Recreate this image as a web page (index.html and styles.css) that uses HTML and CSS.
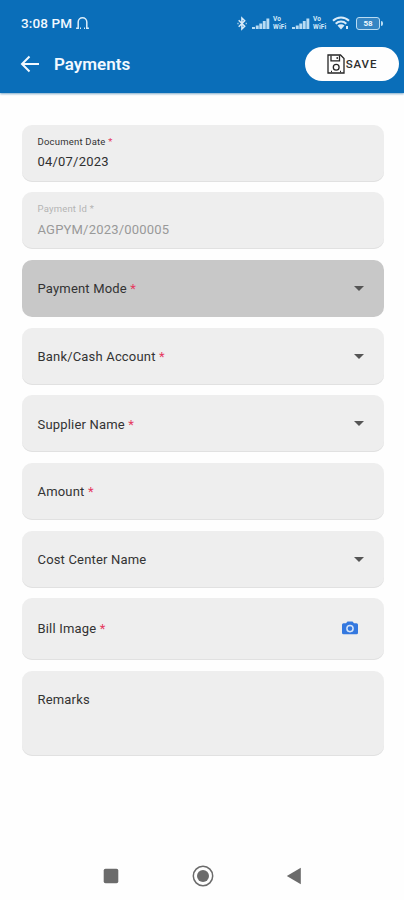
FILE: index.html
```
<!DOCTYPE html>
<html lang="en">
<head>
<meta charset="utf-8">
<meta name="viewport" content="width=device-width">
<title>Payments</title>
<link rel="stylesheet" href="styles.css">
</head>
<body>
<header class="top">
  <div class="status">
    <span class="time">3:08 PM</span>
    <svg class="headset" width="15" height="14" viewBox="0 0 15 14"><path d="M3.2 12.200V6a4.300 4.300 0 0 1 8.600 0v6.200M3.200 9v3.200H1.100M11.800 9v3.200h2.100M5 12.200h1M9 12.200h1"/></svg>
    <div class="indicators">
      <svg class="bt" width="10" height="15" viewBox="0 0 10 15"><path d="M1.700 4.200l6 6L4.900 13V2l2.800 2.800-6 6"/><path d="M.5 7.500h1M8.700 7.500h1"/></svg>
      <svg class="signal" width="18" height="13" viewBox="0 0 18 13"><path d="M0 10h3v2H0zM3.800 8.500h2.900V12H3.800zM7.300 6.500h2.900V12H7.300zM10.800 4h2.900v8h-2.900zM14.400 1.500h2.900V12h-2.900z"/></svg>
      <span class="vo"><span>Vo</span><span>WiFi</span></span>
      <svg class="signal second" width="18" height="13" viewBox="0 0 18 13"><path d="M0 10h3v2H0zM3.800 8.500h2.900V12H3.800zM7.300 6.500h2.900V12H7.300zM10.800 4h2.900v8h-2.900zM14.400 1.500h2.900V12h-2.900z"/></svg>
      <span class="vo"><span>Vo</span><span>WiFi</span></span>
      <svg class="wifi" width="18" height="14" viewBox="0 0 18 14"><path d="M1 4.700a11.500 11.500 0 0 1 16 0M3.700 7.700a7.600 7.600 0 0 1 10.600 0"/><path class="solid" d="M5.500 9.600a4.900 4.900 0 0 1 7 0L9 13.400zM14 10h2v3h-2z"/></svg>
      <span class="battery">58</span>
    </div>
  </div>
  <div class="bar">
    <svg class="back" width="20" height="18" viewBox="0 0 20 18"><path d="M9.500 1.500L2 9l7.500 7.500M2 9h17"/></svg>
    <h1>Payments</h1>
    <button class="save">
      <svg width="18" height="20" viewBox="0 0 18 20"><path d="M1 1h12.500L17 4.500V19H1z"/><path d="M4 1.500v5.300h8.500V1.500M10.200 3v2"/><circle cx="9.200" cy="13.200" r="2.900"/><path d="M4 17.500h1M13 17.500h1"/></svg>
      <span>SAVE</span>
    </button>
  </div>
</header>
<main class="form">
  <div class="field filled"><span class="caption">Document Date <b>*</b></span><span class="value">04/07/2023</span></div>
  <div class="field filled disabled"><span class="caption">Payment Id <b>*</b></span><span class="value id">AGPYM/2023/000005</span></div>
  <div class="field active"><span class="label">Payment Mode <b>*</b></span><i class="caret"></i></div>
  <div class="field"><span class="label">Bank/Cash Account <b>*</b></span><i class="caret"></i></div>
  <div class="field"><span class="label">Supplier Name <b>*</b></span><i class="caret"></i></div>
  <div class="field"><span class="label">Amount <b>*</b></span></div>
  <div class="field"><span class="label">Cost Center Name</span><i class="caret"></i></div>
  <div class="field bill"><span class="label">Bill Image <b>*</b></span>
    <svg class="camera" width="16" height="14" viewBox="0 0 16 14"><path d="M5.500.5h5L12 2.200h2.500Q16 2.200 16 3.700v8q0 1.500-1.500 1.500h-13Q0 13.200 0 11.700v-8q0-1.500 1.500-1.500H4z"/><circle class="ring" cx="8" cy="7.600" r="3.100"/></svg>
  </div>
  <div class="field remarks"><span class="label">Remarks</span></div>
</main>
<nav class="system">
  <svg width="16" height="16" viewBox="0 0 16 16"><rect x=".7" y=".7" width="14.600" height="14.600" rx="1.800"/></svg>
  <svg width="22" height="22" viewBox="0 0 22 22"><circle class="outline" cx="11" cy="11" r="9.700"/><circle cx="11" cy="11" r="6"/></svg>
  <svg width="16" height="18" viewBox="0 0 16 18"><path d="M.8 9L14.800.8v16.400z"/></svg>
</nav>
</body>
</html>
```
FILE: styles.css
```
* { box-sizing: border-box; }
body {
  margin: 0;
  height: 900px;
  display: flex;
  flex-direction: column;
  background: #fefefe;
  font-family: Roboto, "Liberation Sans", sans-serif;
  color: #333;
  overflow: hidden;
}
svg { display: block; flex: none; }
.top {
  height: 93px;
  flex: none;
  background: #0a6eb9;
  color: #f2f9ff;
  box-shadow: 0 1px 2px #7da9c8;
}
.status {
  height: 46px;
  padding: 0 21px;
  display: flex;
  align-items: center;
}
.time { font-size: 13.5px; font-weight: 500; letter-spacing: .1px; white-space: nowrap; width: 54px; }
.headset { fill: none; stroke: #dceefa; stroke-width: 1.500; }
.indicators { margin-left: auto; display: flex; align-items: center; }
.bt { fill: none; stroke: #d8ebf9; stroke-width: 1.500; margin-right: 5px; }
.signal { fill: #b9dcf3; margin-right: 3px; }
.second { margin-left: 3px; }
.vo {
  width: 16px;
  display: flex;
  flex-direction: column;
  font-size: 6.500px;
  line-height: 8px;
  font-weight: 700;
  color: #d3eafa;
  letter-spacing: .2px;
}
.wifi { fill: none; stroke: #d8ebf9; stroke-width: 2; margin: 0 6px 0 3px; }
.wifi .solid { fill: #d8ebf9; stroke: none; }
.battery {
  width: 24px;
  height: 13px;
  margin-right: 3px;
  border: 1.500px solid #b9dcf3;
  border-radius: 3px;
  background: #3585c3;
  font-size: 8px;
  line-height: 11px;
  font-weight: 700;
  text-align: center;
  position: relative;
}
.battery::after {
  content: "";
  position: absolute;
  right: -4px;
  top: 3px;
  width: 2px;
  height: 5px;
  background: #b9dcf3;
  border-radius: 0 2px 2px 0;
}
.bar { height: 36px; padding: 0 5px 0 20px; display: flex; align-items: center; }
.back { fill: none; stroke: #f2f9ff; stroke-width: 2; }
h1 { margin: 0 0 0 14px; font-size: 17px; font-weight: 600; line-height: 22px; letter-spacing: 0; }
.save {
  margin-left: auto;
  width: 94px;
  height: 34px;
  padding: 0;
  border: 0;
  border-radius: 17px;
  background: #fefefe;
  display: flex;
  align-items: center;
  justify-content: center;
  gap: 1px;
  color: #2d2d2d;
  font: 500 11.500px Roboto, "Liberation Sans", sans-serif;
  letter-spacing: .9px;
}
.save svg { fill: none; stroke: #252525; stroke-width: 1.300; }
.form {
  padding: 31.500px 20px 0 21.500px;
  display: flex;
  flex-direction: column;
  gap: 10.700px;
}
.field {
  height: 57px;
  padding: 0 20px 0 16px;
  border-radius: 10px;
  background: #eee;
  box-shadow: inset 0 -1px 0 #e1e1e1;
  display: flex;
  align-items: center;
  justify-content: space-between;
}
.field b { color: #e5395f; font-weight: 400; }
.filled { flex-direction: column; align-items: flex-start; justify-content: flex-start; padding-top: 10px; }
.caption { font-size: 9.500px; line-height: 14px; letter-spacing: .2px; }
.value { font-size: 13px; line-height: 18px; margin-top: 4px; letter-spacing: .2px; color: #303030; }
.disabled { padding-top: 9.500px; }
.disabled, .disabled b { color: #b4b4b4; }
.disabled .value { color: #999; margin-top: 5px; }
.value.id { letter-spacing: .2px; }
.active { background: #c8c8c8; box-shadow: none; }
.label { font-size: 13px; line-height: 18px; letter-spacing: .18px; padding-top: 2px; }
.caret { border: 5px solid transparent; border-top-color: #555; border-bottom: 0; }
.bill { height: 62px; padding-bottom: 2px; }
.camera { fill: #3478df; margin-right: 6px; }
.ring { fill: #3478df; stroke: #d5e4f8; stroke-width: 1.500; }
.remarks { height: 85px; align-items: flex-start; padding-top: 17.500px; }
.system {
  margin-top: auto;
  height: 48px;
  padding: 0 102px 0 103px;
  display: flex;
  align-items: center;
  justify-content: space-between;
  fill: #6b6b6b;
}
.outline { fill: none; stroke: #6b6b6b; stroke-width: 1.500; }
```
